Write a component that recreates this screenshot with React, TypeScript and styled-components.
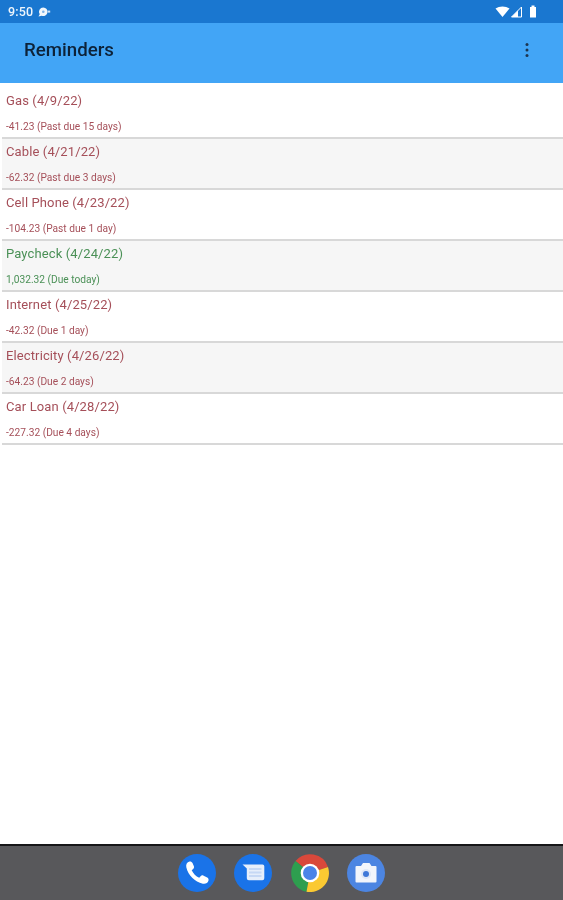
import React from "react";
import styled, { createGlobalStyle } from "styled-components";

const Global = createGlobalStyle`
  html, body { margin: 0; padding: 0; background: #fff; overflow: hidden; }
  body { font-family: Roboto, "Liberation Sans", sans-serif; }
`;

const Screen = styled.div`
  width: 563px;
  height: 900px;
  display: flex;
  flex-direction: column;
  overflow: hidden;
  background: #fff;
  filter: blur(0.55px);
`;

const StatusBar = styled.div`
  height: 23px;
  flex: none;
  background: #1a77d0;
  display: flex;
  align-items: center;
  justify-content: space-between;
  padding: 0 26px 0 8px;
  color: #eef5fc;
`;

const StatusGroup = styled.div`
  display: flex;
  align-items: center;
  gap: 4px;
`;

const Clock = styled.span`
  font-size: 12.5px;
  font-weight: 500;
  letter-spacing: 0.2px;
`;

const AppBar = styled.header`
  height: 60px;
  flex: none;
  background: #42a5f6;
  display: flex;
  align-items: center;
  justify-content: space-between;
  padding: 0 34px 6px 24px;
  box-sizing: border-box;
`;

const Title = styled.h1`
  margin: 0;
  font-size: 18.7px;
  font-weight: 500;
  color: #0d2238;
`;

const List = styled.main`
  flex: 1;
  display: flex;
  flex-direction: column;
  padding-top: 5px;
`;

const Row = styled.div<{ $shaded: boolean; $tone: string }>`
  height: 51px;
  box-sizing: border-box;
  margin-left: 2px;
  padding: 5px 0 0 4px;
  background: ${(p) => (p.$shaded ? "#f6f6f6" : "#fff")};
  border-bottom: 2px solid #d8d8d8;
  color: ${(p) => p.$tone};
  display: flex;
  flex-direction: column;
`;

const RowTitle = styled.div`
  font-size: 13px;
  line-height: 15px;
  letter-spacing: 0.12px;
`;

const RowDetail = styled.div`
  font-size: 10.2px;
  line-height: 12px;
  margin-top: 13px;
`;

const Dock = styled.footer`
  height: 56px;
  flex: none;
  box-sizing: border-box;
  background: #58585b;
  border-top: 2px solid #161618;
  display: flex;
  align-items: center;
  justify-content: center;
  gap: 18.5px;
  padding-bottom: 1px;
`;

const Glyph = styled.svg`
  display: block;
  flex: none;
`;

const SignalGlyph = styled(Glyph)`
  margin-left: -3px;
`;

const BatteryGlyph = styled(Glyph)`
  margin-left: 3px;
`;

const rows = [
  { t: "Gas (4/9/22)", d: "-41.23 (Past due 15 days)" },
  { t: "Cable (4/21/22)", d: "-62.32 (Past due 3 days)" },
  { t: "Cell Phone (4/23/22)", d: "-104.23 (Past due 1 day)" },
  { t: "Paycheck (4/24/22)", d: "1,032.32 (Due today)", good: true },
  { t: "Internet (4/25/22)", d: "-42.32 (Due 1 day)" },
  { t: "Electricity (4/26/22)", d: "-64.23 (Due 2 days)" },
  { t: "Car Loan (4/28/22)", d: "-227.32 (Due 4 days)" },
];

export default function App() {
  return (
    <Screen>
      <Global />
      <StatusBar>
        <StatusGroup>
          <Clock>9:50</Clock>
          <Glyph width="14" height="12" viewBox="0 0 14 12">
            <path d="M6.300 1.500a4.300 4.300 0 1 1-1.600 8.300L1.500 10.600l1.200-2.400A4.300 4.300 0 0 1 6.300 1.500z" fill="#f2f7fc" />
            <circle cx="6.300" cy="5.800" r="1.300" fill="#7fb2e6" />
            <rect x="10.800" y="4.600" width="2.400" height="2" fill="#cfe2f5" />
          </Glyph>
        </StatusGroup>
        <StatusGroup>
          <Glyph width="15" height="12" viewBox="0 0 15 12">
            <path d="M0.500 2.500C4.500-0.300 10.500-0.300 14.500 2.500L7.500 11z" fill="#fff" />
          </Glyph>
          <SignalGlyph width="11" height="12" viewBox="0 0 11 12">
            <path d="M10.500 1V11H0.500z" fill="none" stroke="#fff" strokeWidth="1" />
            <path d="M7 4.500V11H0.500z" fill="#fff" />
          </SignalGlyph>
          <BatteryGlyph width="8" height="13" viewBox="0 0 8 13">
            <path d="M2.500 0.500h3V2H7v10.500H1V2h1.500z" fill="#fff" />
          </BatteryGlyph>
        </StatusGroup>
      </StatusBar>
      <AppBar>
        <Title>Reminders</Title>
        <Glyph width="4" height="16" viewBox="0 0 4 16">
          <circle cx="2" cy="2.500" r="1.500" fill="#1c3550" />
          <circle cx="2" cy="8" r="1.500" fill="#1c3550" />
          <circle cx="2" cy="13.500" r="1.500" fill="#1c3550" />
        </Glyph>
      </AppBar>
      <List>
        {rows.map((r, i) => (
          <Row key={r.t} $shaded={i % 2 === 1} $tone={r.good ? "#4a9056" : "#a54f59"}>
            <RowTitle>{r.t}</RowTitle>
            <RowDetail>{r.d}</RowDetail>
          </Row>
        ))}
      </List>
      <Dock>
        <Glyph width="38" height="38" viewBox="0 0 38 38">
          <circle cx="19" cy="19" r="19" fill="#1a73e8" />
          <path d="M11.500 7.500C9 8.200 7.700 10.500 8.300 13.200c1.800 8 8.500 14.700 16.500 16.500 2.700.6 5-.7 5.700-3.200.3-1.200-.2-2.300-1.300-2.900l-3.600-1.900c-1.100-.6-2.200-.4-3 .5l-1.400 1.600c-3.300-1.500-6-4.300-7.500-7.600l1.500-1.300c.9-.8 1.100-1.900.6-3L14.500 9c-.6-1.200-1.800-1.800-3-1.500z" fill="#fff" />
        </Glyph>
        <Glyph width="38" height="38" viewBox="0 0 38 38">
          <circle cx="19" cy="19" r="19" fill="#1a73e8" />
          <path d="M8.500 10.500h20a1.800 1.800 0 0 1 1.800 1.800v11.900a2 2 0 0 1-2 2H14.800a2 2 0 0 1-2-2v-9.700z" fill="#e6eefb" />
          <path d="M15 15h12.500M15 18.500h12.500M15 22h12.500" stroke="#c6d8f5" strokeWidth="1.800" />
        </Glyph>
        <Glyph width="38" height="38" viewBox="0 0 38 38">
          <path d="M19 19L4.500 7A19 19 0 0 1 37 13z" fill="#d9483b" />
          <path d="M19 19L4.500 7A19 19 0 0 0 15.500 37.700z" fill="#2e9e4f" />
          <path d="M19 19L37 13A19 19 0 0 1 15.500 37.700z" fill="#fbc932" />
          <circle cx="19" cy="19" r="9.300" fill="#fff" />
          <circle cx="19" cy="19" r="7" fill="#4b84e8" />
        </Glyph>
        <Glyph width="38" height="38" viewBox="0 0 38 38">
          <circle cx="19" cy="19" r="19" fill="#4c85e2" />
          <path d="M9.500 12h4.500l2-3h6.500l2 3h4a1 1 0 0 1 1 1v14.500a1 1 0 0 1-1 1h-19a1 1 0 0 1-1-1V13a1 1 0 0 1 1-1z" fill="#f2f5fb" />
          <circle cx="19" cy="20" r="5" fill="#dfe8f7" />
          <circle cx="19" cy="20" r="3" fill="#3f78d8" />
        </Glyph>
      </Dock>
    </Screen>
  );
}
